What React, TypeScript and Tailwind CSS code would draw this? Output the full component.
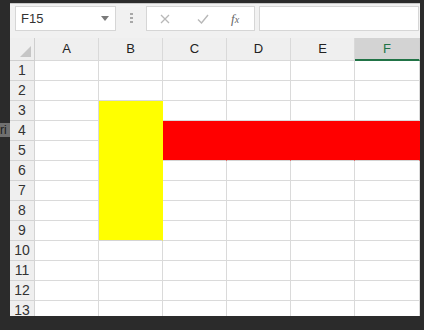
import React from "react";

const COLS = ["A", "B", "C", "D", "E", "F"];
const ROWS = Array.from({ length: 13 }, (_, i) => i + 1);

function cellClass(r: number, c: number) {
  const yellow = c === 1 && r >= 3 && r <= 9;
  const red = c >= 2 && (r === 4 || r === 5);
  let cls = "h-full shrink-0 border-r border-b ";
  cls += c === 5 ? "w-[65px] " : "w-[64px] ";
  if (yellow) {
    cls += "bg-[#ffff00] border-r-[#ffff00] " + (r === 9 ? "border-b-[#d4d4d4]" : "border-b-[#ffff00]");
  } else if (red) {
    cls += "bg-[#ff0000] border-r-[#ff0000] " + (r === 4 ? "border-b-[#ff0000]" : "border-b-[#d4d4d4]");
  } else {
    cls += "bg-white border-[#dadada]";
  }
  return cls;
}

export default function App() {
  return (
    <div
      className="w-[424px] h-[330px] bg-[#2b2b2b] overflow-hidden relative"
      style={{ fontFamily: '"Liberation Sans", Arial, sans-serif' }}
    >
      <div className="absolute left-0 top-[123px] w-[10px] h-[14px] bg-[#707070] text-[#1c1c1c] text-[12px] leading-[14px] whitespace-nowrap">
        ri
      </div>
      <div className="ml-[10px] mt-[3px] w-[410px] h-[313px] bg-white overflow-hidden flex flex-col">
        {/* toolbar */}
        <div className="h-[35px] shrink-0 bg-[#f1f1f1] flex items-start pt-[2px] border-t border-[#c8c8c8]">
          <div className="ml-[5px] w-[101px] h-[25px] bg-white border border-[#d6d6d6] flex items-center justify-between pl-[5px] pr-[6px]">
            <span className="text-[13px] text-[#333]">F15</span>
            <svg width="8" height="5" viewBox="0 0 8 5">
              <path d="M0 0 L8 0 L4 5 Z" fill="#7a7a7a" />
            </svg>
          </div>
          <div className="ml-[14px] mt-[7px] flex flex-col gap-[2px]">
            <div className="w-[3px] h-[2px] bg-[#a8a8a8]" />
            <div className="w-[3px] h-[2px] bg-[#a8a8a8]" />
            <div className="w-[3px] h-[2px] bg-[#a8a8a8]" />
          </div>
          <div className="ml-[13px] w-[109px] h-[25px] bg-white border border-[#d6d6d6] flex items-center">
            <svg className="ml-[13px]" width="10" height="10" viewBox="0 0 10 10">
              <path d="M1 1 L9 9 M9 1 L1 9" stroke="#b8b8b8" strokeWidth="1.3" />
            </svg>
            <svg className="ml-[27px]" width="12" height="10" viewBox="0 0 12 10">
              <path d="M1 5.5 L4.5 9 L11 1" stroke="#b8b8b8" strokeWidth="1.4" fill="none" />
            </svg>
            <span
              className="ml-[22px] text-[13px] italic text-[#666]"
              style={{ fontFamily: '"Liberation Serif", serif' }}
            >
              f<span className="text-[10px]">x</span>
            </span>
          </div>
          <div className="ml-[4px] w-[160px] h-[25px] bg-white border border-[#d6d6d6]" />
        </div>
        {/* column headers */}
        <div className="h-[23px] shrink-0 flex bg-[#efefef]">
          <div className="w-[25px] h-full shrink-0 border-r border-b border-[#cfcfcf] relative flex items-end justify-end pr-[3px] pb-[3px]">
            <svg width="11" height="11" viewBox="0 0 11 11">
              <path d="M11 0 L11 11 L0 11 Z" fill="#c6c6c6" />
            </svg>
          </div>
          {COLS.map((c, i) => (
            <div
              key={c}
              className={
                i === 5
                  ? "w-[65px] h-full shrink-0 bg-[#d3d3d3] border-r border-[#cfcfcf] border-b-2 border-b-[#217346] flex items-center justify-center text-[13px] text-[#217346]"
                  : "w-[64px] h-full shrink-0 border-r border-b border-[#d9d9d9] flex items-center justify-center text-[13px] text-[#222]"
              }
            >
              {c}
            </div>
          ))}
        </div>
        {/* rows */}
        {ROWS.map((r) => (
          <div key={r} className="h-[20px] shrink-0 flex">
            <div className="w-[25px] h-full shrink-0 bg-[#efefef] border-r border-b border-[#d4d4d4] flex items-center justify-center text-[14px] text-[#333]">
              {r}
            </div>
            {COLS.map((c, ci) => (
              <div key={c} className={cellClass(r, ci)} />
            ))}
          </div>
        ))}
      </div>
    </div>
  );
}
